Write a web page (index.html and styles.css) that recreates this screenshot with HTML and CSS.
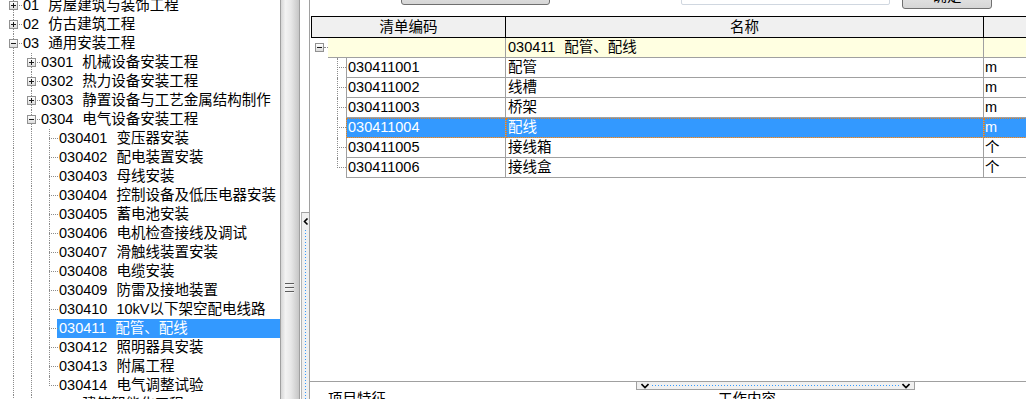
FILE: index.html
```html
<!DOCTYPE html>
<html lang="zh-CN">
<head>
  <meta charset="UTF-8" />
  <title>清单指引</title>
  <link rel="stylesheet" href="styles.css">
</head>
<body>
  <div class="app">
    <!-- 左侧章节树 -->
    <div class="tree-pane">
      <div class="tree">
        <div class="tr"><i class="t mid"><b class="box plus"></b></i><span class="lbl"><span class="code">01</span>房屋建筑与装饰工程</span></div>
        <div class="tr"><i class="t mid"><b class="box plus"></b></i><span class="lbl"><span class="code">02</span>仿古建筑工程</span></div>
        <div class="tr"><i class="t mid"><b class="box minus"></b></i><span class="lbl"><span class="code">03</span>通用安装工程</span></div>
        <div class="tr"><i class="g v"></i><i class="t mid"><b class="box plus"></b></i><span class="lbl"><span class="code">0301</span>机械设备安装工程</span></div>
        <div class="tr"><i class="g v"></i><i class="t mid"><b class="box plus"></b></i><span class="lbl"><span class="code">0302</span>热力设备安装工程</span></div>
        <div class="tr"><i class="g v"></i><i class="t mid"><b class="box plus"></b></i><span class="lbl"><span class="code">0303</span>静置设备与工艺金属结构制作</span></div>
        <div class="tr"><i class="g v"></i><i class="t mid"><b class="box minus"></b></i><span class="lbl"><span class="code">0304</span>电气设备安装工程</span></div>
        <div class="tr"><i class="g v"></i><i class="g v"></i><i class="t mid"></i><span class="lbl"><span class="code">030401</span>变压器安装</span></div>
        <div class="tr"><i class="g v"></i><i class="g v"></i><i class="t mid"></i><span class="lbl"><span class="code">030402</span>配电装置安装</span></div>
        <div class="tr"><i class="g v"></i><i class="g v"></i><i class="t mid"></i><span class="lbl"><span class="code">030403</span>母线安装</span></div>
        <div class="tr"><i class="g v"></i><i class="g v"></i><i class="t mid"></i><span class="lbl"><span class="code">030404</span>控制设备及低压电器安装</span></div>
        <div class="tr"><i class="g v"></i><i class="g v"></i><i class="t mid"></i><span class="lbl"><span class="code">030405</span>蓄电池安装</span></div>
        <div class="tr"><i class="g v"></i><i class="g v"></i><i class="t mid"></i><span class="lbl"><span class="code">030406</span>电机检查接线及调试</span></div>
        <div class="tr"><i class="g v"></i><i class="g v"></i><i class="t mid"></i><span class="lbl"><span class="code">030407</span>滑触线装置安装</span></div>
        <div class="tr"><i class="g v"></i><i class="g v"></i><i class="t mid"></i><span class="lbl"><span class="code">030408</span>电缆安装</span></div>
        <div class="tr"><i class="g v"></i><i class="g v"></i><i class="t mid"></i><span class="lbl"><span class="code">030409</span>防雷及接地装置</span></div>
        <div class="tr"><i class="g v"></i><i class="g v"></i><i class="t mid"></i><span class="lbl"><span class="code">030410</span>10kV以下架空配电线路</span></div>
        <div class="tr"><i class="g v"></i><i class="g v"></i><i class="t mid"></i><span class="lbl selected"><span class="code">030411</span>配管、配线</span></div>
        <div class="tr"><i class="g v"></i><i class="g v"></i><i class="t mid"></i><span class="lbl"><span class="code">030412</span>照明器具安装</span></div>
        <div class="tr"><i class="g v"></i><i class="g v"></i><i class="t mid"></i><span class="lbl"><span class="code">030413</span>附属工程</span></div>
        <div class="tr"><i class="g v"></i><i class="g v"></i><i class="t last"></i><span class="lbl"><span class="code">030414</span>电气调整试验</span></div>
        <div class="tr"><i class="g v"></i><i class="t mid"><b class="box plus"></b></i><span class="lbl"><span class="code">0305</span>建筑智能化工程</span></div>
      </div>
    </div>

    <!-- 分隔条 -->
    <div class="splitter"><span class="grip"></span></div>

    <div class="strip">
      <div class="strip-tab">
        <svg class="chev-left" width="6" height="8" viewBox="0 0 6 8"><polyline points="4.5,0.5 1.5,3.5 4.5,6.5" fill="none" stroke="#000" stroke-width="1.6"/></svg>
        <span class="dots-v"></span>
      </div>
    </div>

    <!-- 右侧清单 -->
    <div class="main">
      <div class="toolbar">
        <button class="btn btn-wide"></button>
        <input class="search" type="text" />
        <button class="btn btn-ok">确定</button>
      </div>

      <div class="grid-wrap">
        <div class="grid">
          <div class="grid-head">
            <div class="hc c1">清单编码</div>
            <div class="hc c2">名称</div>
            <div class="hc c3"></div>
          </div>

          <div class="gr group">
            <div class="gi gi-group"><b class="box minus"></b></div>
            <div class="gc c1"></div>
            <div class="gc c2"><span class="code">030411</span>配管、配线</div>
            <div class="gc c3"></div>
          </div>
          <div class="gr">
            <div class="gi gi-item mid"></div>
            <div class="gc c1">030411001</div>
            <div class="gc c2">配管</div>
            <div class="gc c3">m</div>
          </div>
          <div class="gr">
            <div class="gi gi-item mid"></div>
            <div class="gc c1">030411002</div>
            <div class="gc c2">线槽</div>
            <div class="gc c3">m</div>
          </div>
          <div class="gr">
            <div class="gi gi-item mid"></div>
            <div class="gc c1">030411003</div>
            <div class="gc c2">桥架</div>
            <div class="gc c3">m</div>
          </div>
          <div class="gr sel">
            <div class="gi gi-item mid"></div>
            <div class="gc c1">030411004</div>
            <div class="gc c2">配线</div>
            <div class="gc c3">m</div>
          </div>
          <div class="gr">
            <div class="gi gi-item mid"></div>
            <div class="gc c1">030411005</div>
            <div class="gc c2">接线箱</div>
            <div class="gc c3">个</div>
          </div>
          <div class="gr">
            <div class="gi gi-item last"></div>
            <div class="gc c1">030411006</div>
            <div class="gc c2">接线盒</div>
            <div class="gc c3">个</div>
          </div>
        </div>
      </div>

      <div class="detail">
        <div class="detail-tab">
          <svg width="8" height="6" viewBox="0 0 8 6"><polyline points="0.5,1 4,4.5 7.5,1" fill="none" stroke="#000" stroke-width="1.6"/></svg>
          <span class="dots-h"></span>
          <svg width="8" height="6" viewBox="0 0 8 6"><polyline points="0.5,1 4,4.5 7.5,1" fill="none" stroke="#000" stroke-width="1.6"/></svg>
        </div>
        <div class="detail-labels">
          <span class="dl dl-first">项目特征</span>
          <span class="dl">工作内容</span>
        </div>
      </div>
    </div>
  </div>
</body>
</html>
```

FILE: styles.css
```css
* {
  box-sizing: border-box;
}

body {
  margin: 0;
  font-family: "Liberation Sans", "Noto Sans CJK SC", sans-serif;
  font-size: 14.5px;
  color: #000;
  background: #fff;
  overflow: hidden;
}

.app {
  display: flex;
  width: 1026px;
  height: 399px;
  overflow: hidden;
}

/* ---------- 树 ---------- */
.tree-pane {
  width: 280px;
  flex: none;
  overflow: hidden;
  background: #fff;
}

.tree {
  margin-top: -4px;
  padding-left: 4px;
}

.tr {
  display: flex;
  height: 19px;
  white-space: nowrap;
}

.g, .t {
  display: block;
  position: relative;
  width: 18px;
  height: 19px;
  flex: none;
}

.g.v::after,
.t.mid::after,
.t.last::after {
  content: "";
  position: absolute;
  left: 9px;
  top: 0;
  bottom: 0;
  border-left: 1px dotted #8c8c8c;
}

.t.last::after {
  bottom: auto;
  height: 10px;
}

.t::before {
  content: "";
  position: absolute;
  left: 9px;
  right: 0;
  top: 9px;
  border-top: 1px dotted #8c8c8c;
}

.box {
  display: block;
  position: relative;
  z-index: 1;
  width: 9px;
  height: 9px;
  margin: 5px 0 0 5px;
  border: 1px solid #919191;
  background: linear-gradient(#fff, #dcdcdc);
}

.box.minus {
  background:
    linear-gradient(#1a1a1a, #1a1a1a) center / 5px 1px no-repeat,
    linear-gradient(#fff, #dcdcdc);
}

.box.plus {
  background:
    linear-gradient(#1a1a1a, #1a1a1a) center / 5px 1px no-repeat,
    linear-gradient(#1a1a1a, #1a1a1a) center / 1px 5px no-repeat,
    linear-gradient(#fff, #dcdcdc);
}

.lbl {
  flex: 1;
  margin-left: -1px;
  padding: 0 2px;
  line-height: 19px;
}

.lbl.selected {
  background: #3399ff;
  color: #fff;
}

.code {
  margin-right: 9px;
}

/* ---------- 分隔条 ---------- */
.splitter {
  width: 20px;
  flex: none;
  border-left: 1px solid #a0a0a0;
  border-right: 1px solid #a0a0a0;
  background: linear-gradient(to right, #d6d6d6 0, #f3f3f3 25%, #e8e8e8 55%, #c6c6c6 100%);
}

.grip {
  display: block;
  width: 9px;
  height: 10px;
  margin: 283px 0 0 4px;
  background: repeating-linear-gradient(#5c5c5c 0 1px, #f4f4f4 1px 2px, transparent 2px 4px);
}

.strip {
  width: 10px;
  flex: none;
  border-right: 1px solid #a0a0a0;
  background: #fff;
  display: flex;
  flex-direction: column;
}

.strip-tab {
  flex: 1;
  margin-top: 212px;
  margin-left: 1px;
  border-top: 1px solid #a0a0a0;
  border-left: 1px solid #b4b4b4;
  background: #f0f0f0;
  display: flex;
  flex-direction: column;
  align-items: center;
}

.chev-left {
  margin-top: 5px;
}

.dots-v {
  flex: 1;
  width: 1px;
  margin-top: 4px;
  background: repeating-linear-gradient(#3399ff 0 1px, transparent 1px 3px);
}

/* ---------- 右侧 ---------- */
.main {
  flex: 1;
  display: flex;
  flex-direction: column;
  min-width: 0;
}

.toolbar {
  height: 16px;
  flex: none;
  display: flex;
  align-items: flex-start;
  overflow: hidden;
}

.btn {
  font: inherit;
  border: 1px solid #707070;
  border-radius: 3px;
  background: linear-gradient(#f2f2f2, #d6d6d6);
  padding: 0;
}

.btn-wide {
  width: 149px;
  height: 24px;
  margin: -19px 0 0 91px;
}

.search {
  width: 209px;
  height: 22px;
  margin: -17px 0 0 131px;
  border: 1px solid #d0d7e0;
  border-radius: 2px;
  background: #fff;
}

.btn-ok {
  width: 90px;
  height: 26px;
  margin: -17px 0 0 12px;
  line-height: 24px;
}

.grid-wrap {
  flex: 1;
  overflow: hidden;
}

.grid {
  margin-left: 1px;
  width: 760px;
}

.grid-head {
  display: flex;
  height: 22px;
  border-top: 1px solid #000;
  border-bottom: 1px solid #000;
  border-left: 1px solid #000;
  background: #f0f0f0;
}

.hc {
  line-height: 20px;
  text-align: center;
  border-right: 1px solid #000;
}

.hc.c1 { width: 194px; }
.hc.c2 { width: 478px; }
.hc.c3 { flex: 1; border-right: none; }

.gr {
  display: flex;
  height: 20px;
  white-space: nowrap;
}

.gi {
  position: relative;
  flex: none;
  height: 20px;
}

.gi-group {
  width: 17px;
}

.gi-group .box {
  margin: 5px 0 0 4px;
}

.gi-group::before {
  content: "";
  position: absolute;
  left: 13px;
  right: 0;
  top: 9px;
  border-top: 1px dotted #8c8c8c;
}

.gi-item {
  width: 35px;
}

.gi-item::before {
  content: "";
  position: absolute;
  left: 26px;
  right: 0;
  top: 9px;
  border-top: 1px dotted #8c8c8c;
}

.gi-item::after {
  content: "";
  position: absolute;
  left: 26px;
  top: 0;
  bottom: 0;
  border-left: 1px dotted #8c8c8c;
}

.gi-item.last::after {
  bottom: auto;
  height: 10px;
}

.gc {
  line-height: 19px;
  border-right: 1px solid #a0a0a0;
  border-bottom: 1px solid #a0a0a0;
  padding: 0 2px;
  overflow: hidden;
}

.gr .gc.c1 {
  width: 160px;
  border-left: 1px solid #a0a0a0;
  padding-left: 1px;
}

.gr.group .gc.c1 {
  width: 178px;
  border-left: none;
}

.gc.c2 { width: 478px; }
.gc.c3 { flex: 1; border-right: none; padding-left: 1px; }

.gr.group .gc {
  background: #ffffe1;
}

.gr.sel .gc {
  background: #3399ff;
  color: #fff;
  outline: 1px dotted #d9822b;
  outline-offset: -1px;
}

/* ---------- 下方明细 ---------- */
.detail {
  flex: none;
  height: 18px;
  border-top: 1px solid #a0a0a0;
}

.detail-tab {
  display: flex;
  align-items: center;
  gap: 3px;
  width: 279px;
  height: 8px;
  margin-left: 326px;
  padding: 0 4px;
  border: 1px solid #a0a0a0;
  border-top: none;
  background: #f0f0f0;
}

.dots-h {
  flex: 1;
  height: 1px;
  background: repeating-linear-gradient(to right, #3399ff 0 1px, transparent 1px 3px);
}

.detail-labels {
  display: flex;
  padding-left: 18px;
  line-height: 19px;
}

.dl-first {
  width: 390px;
}
```
